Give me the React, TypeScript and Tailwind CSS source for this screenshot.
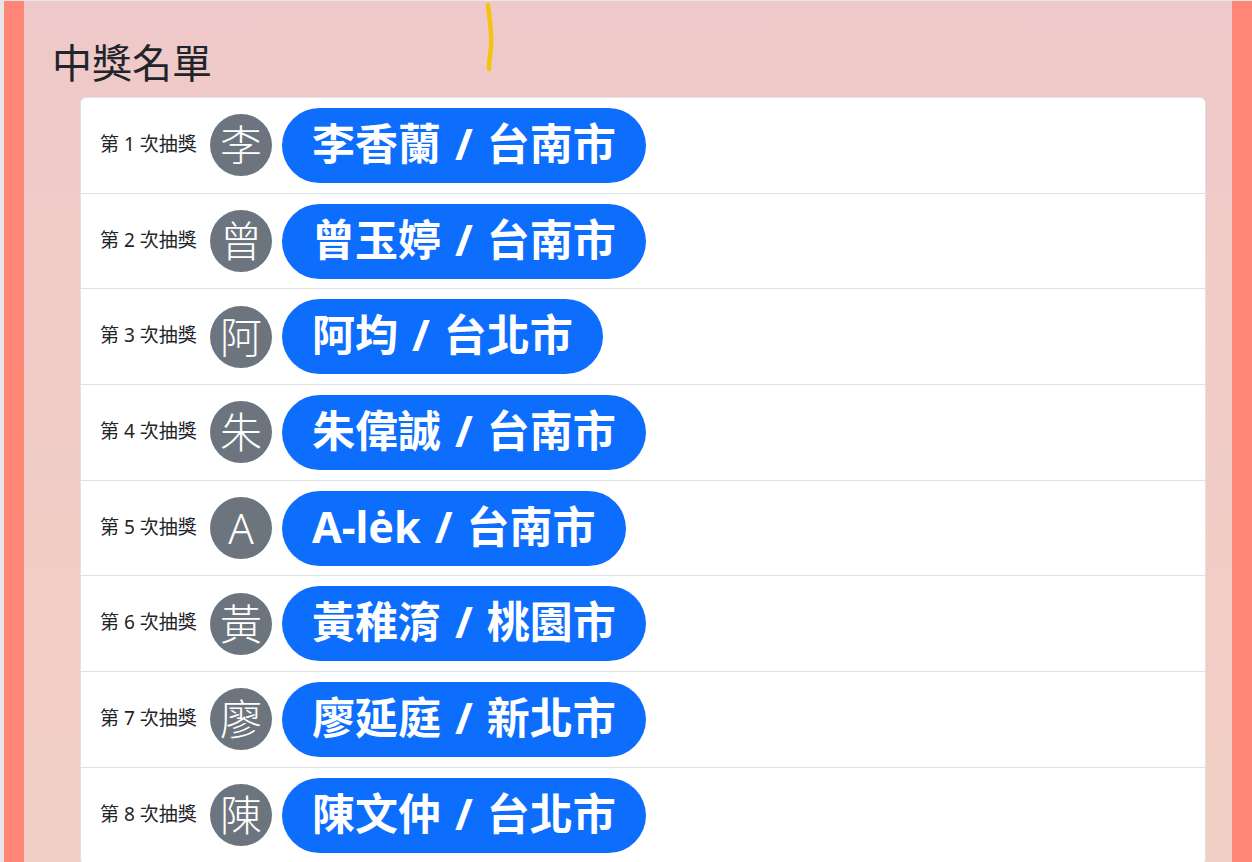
const winners = [
  { n: 1, initial: '李', name: '李香蘭', city: '台南市' },
  { n: 2, initial: '曾', name: '曾玉婷', city: '台南市' },
  { n: 3, initial: '阿', name: '阿均', city: '台北市' },
  { n: 4, initial: '朱', name: '朱偉誠', city: '台南市' },
  { n: 5, initial: 'A', name: 'A-lėk', city: '台南市' },
  { n: 6, initial: '黃', name: '黃稚淯', city: '桃園市' },
  { n: 7, initial: '廖', name: '廖延庭', city: '新北市' },
  { n: 8, initial: '陳', name: '陳文仲', city: '台北市' },
];

const font = { fontFamily: '"Segoe UI", "Noto Sans", "Noto Sans CJK TC", sans-serif' };

export default function App() {
  return (
    <div className="h-[862px] w-[1252px] overflow-hidden bg-[#ebe6e6] pt-px pl-1 flex" style={font}>
      {/* left strip */}
      <div className="w-5 shrink-0 bg-[#ff8676]" />

      {/* main */}
      <main className="relative flex-1 bg-linear-to-b from-[#efc9c9] to-[#f2cfc4] pt-[38px]">
        {/* marker scribble */}
        <svg className="absolute left-[458px] top-0" width="16" height="74" viewBox="0 0 16 74">
          <path d="M6 4 C8 20, 10 34, 9 46 C8 54, 7 60, 7 68" stroke="#f1c40f" strokeWidth="4.5" fill="none" strokeLinecap="round" />
        </svg>

        <h1 className="ml-7 mb-[10px] text-[40px] leading-[48px] font-normal text-[#212529]">中獎名單</h1>

        <ul className="ml-14 mr-[26px] bg-white rounded-md border border-[#dee2e6]">
          {winners.map((w) => (
            <li key={w.n} className="h-[95.7px] flex items-center gap-[10px] px-[19px] border-b border-[#dee2e6]">
              <span className="text-[19px] leading-none pb-[2px] text-[#212529] w-[100px] whitespace-nowrap">第 {w.n} 次抽獎</span>
              <span className="w-[62px] h-[62px] rounded-full bg-[#6c757d] text-white text-[42px] font-light flex items-center justify-center leading-none">
                {w.initial}
              </span>
              <span className="h-[75px] px-[30px] pb-[4px] rounded-full bg-[#0d6efd] text-white text-[43px] font-bold flex items-center whitespace-nowrap leading-none">
                {w.name}
                <span className="px-[14px]">/</span>
                {w.city}
              </span>
            </li>
          ))}
        </ul>
      </main>

      {/* right strip */}
      <div className="w-5 shrink-0 bg-[#ff8676]" />
    </div>
  );
}
